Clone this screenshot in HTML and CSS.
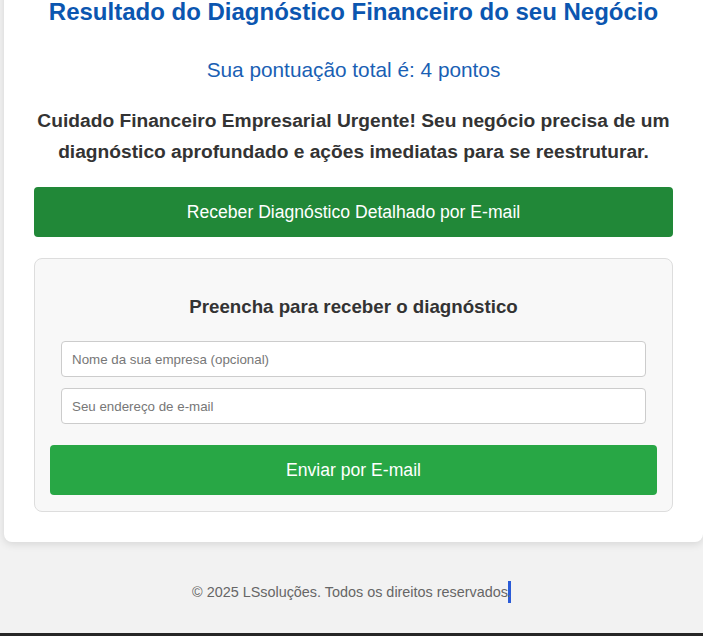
FILE: index.html
```html
<!DOCTYPE html>
<html lang="pt-BR">
<head>
<meta charset="utf-8">
<title>Resultado do Diagnóstico</title>
<link rel="stylesheet" href="styles.css">
</head>
<body>
<main class="card">
  <h1 class="title">Resultado do Diagnóstico Financeiro do seu Negócio</h1>
  <p class="score">Sua pontuação total é: 4 pontos</p>
  <p class="message">Cuidado Financeiro Empresarial Urgente! Seu negócio precisa de um diagnóstico aprofundado e ações imediatas para se reestruturar.</p>
  <button class="btn btn-dark" type="button">Receber Diagnóstico Detalhado por E-mail</button>
  <section class="form-box">
    <h2 class="form-title">Preencha para receber o diagnóstico</h2>
    <input class="field" type="text" placeholder="Nome da sua empresa (opcional)">
    <input class="field" type="email" placeholder="Seu endereço de e-mail">
    <button class="btn btn-light" type="button">Enviar por E-mail</button>
  </section>
</main>
<footer class="footer">
  <p class="copy">© 2025 LSsoluções. Todos os direitos reservados<span class="sel">.</span></p>
</footer>
<div class="bottom-bar"></div>
</body>
</html>
```
FILE: styles.css
```css
* { box-sizing: border-box; }
html, body { margin: 0; padding: 0; }
body {
  background: #f2f2f2;
  font-family: "Liberation Sans", Arial, sans-serif;
  color: #333;
  width: 703px;
  height: 636px;
  overflow: hidden;
}
.card {
  margin: -20px 0 0 4px;
  width: 699px;
  background: #fff;
  border-radius: 8px;
  box-shadow: 0 2px 8px rgba(0,0,0,0.12);
  padding: 20px 30px 30px 30px;
  text-align: center;
}
.title {
  margin: 0;
  font-size: 24px;
  line-height: 24px;
  font-weight: bold;
  color: #0b56b0;
}
.score {
  margin: 34px 0 0;
  font-size: 20.8px;
  line-height: 24px;
  color: #1a5fb4;
}
.message {
  margin: 23px 0 0;
  font-size: 19.2px;
  line-height: 31px;
  font-weight: bold;
  color: #333;
}
.btn {
  display: block;
  width: 100%;
  height: 50px;
  border: none;
  border-radius: 4px;
  color: #fff;
  font-family: "Liberation Sans", Arial, sans-serif;
  font-size: 17.6px;
  cursor: pointer;
}
.btn-dark { background: #218838; margin-top: 20px; }
.btn-light { background: #28a745; margin-top: 21px; }
.form-box {
  margin-top: 21px;
  background: #f8f8f8;
  border: 1px solid #ddd;
  border-radius: 8px;
  padding: 15px 15px 16px;
}
.form-title {
  margin: 21px 0 22px;
  font-size: 18.72px;
  line-height: 24px;
  font-weight: bold;
  color: #333;
}
.field {
  display: block;
  width: calc(100% - 22px);
  margin: 0 11px 11px;
  height: 36px;
  border: 1px solid #ccc;
  border-radius: 4px;
  background: #fff;
  padding: 0 10px;
  font-family: "Liberation Sans", Arial, sans-serif;
  font-size: 13.333px;
  color: #333;
}
.field::placeholder { color: #777; }
.field:last-of-type { margin-bottom: 0; }
.footer {
  padding-top: 39px;
  display: flex;
  justify-content: center;
}
.copy {
  margin: 0;
  font-size: 14.4px;
  line-height: 22px;
  color: #666;
  text-align: center;
}
.sel {
  display: inline-block;
  background: #2a5bd7;
  color: #666;
  width: 3px;
  height: 22px;
  line-height: 22px;
  vertical-align: top;
  text-indent: -1px;
}
.bottom-bar {
  position: fixed;
  left: 0;
  bottom: 0;
  width: 100%;
  height: 3px;
  background: #262626;
}
```
